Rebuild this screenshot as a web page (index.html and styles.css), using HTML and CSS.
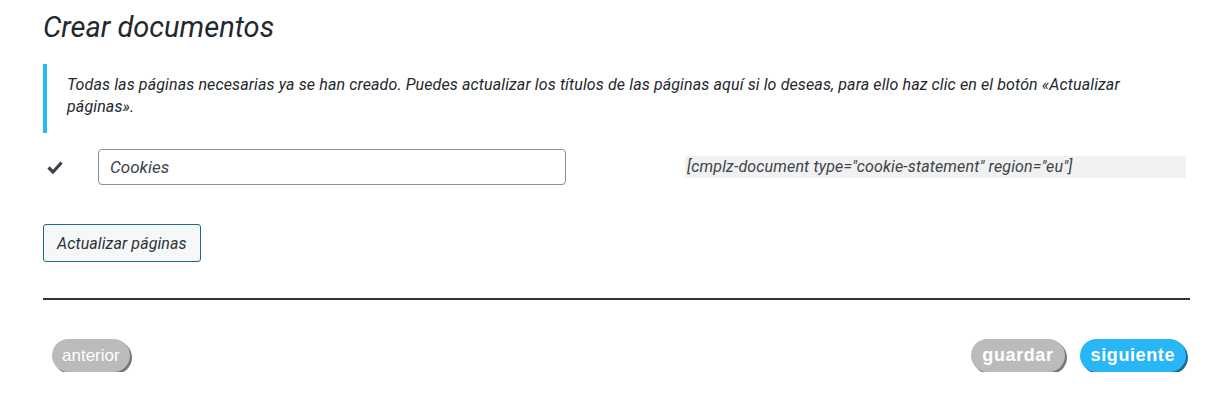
FILE: index.html
```html
<!DOCTYPE html>
<html lang="es">
<head>
<meta charset="utf-8">
<title>Crear documentos</title>
<link rel="stylesheet" href="styles.css">
</head>
<body>
<div class="wrap">
  <h1 class="title">Crear documentos</h1>
  <div class="notice">
    <p>Todas las páginas necesarias ya se han creado. Puedes actualizar los títulos de las páginas aquí si lo deseas, para ello haz clic en el botón «Actualizar páginas».</p>
  </div>
  <div class="doc-row">
    <span class="check">
      <svg width="16" height="14" viewBox="0 0 16 14"><path d="M1.5 7.5 L6 12 L14.5 2.5" fill="none" stroke="#3c434a" stroke-width="3.2" stroke-linecap="butt" stroke-linejoin="miter"/></svg>
    </span>
    <input class="page-input" type="text" value="Cookies">
    <div class="shortcode-cell"><span class="shortcode">[cmplz-document type="cookie-statement" region="eu"]</span></div>
  </div>
  <div class="actions">
    <button class="btn-update">Actualizar páginas</button>
  </div>
  <hr class="sep">
  <div class="nav">
    <button class="pill pill-grey">anterior</button>
    <div class="nav-right">
      <button class="pill pill-grey pill-bold">guardar</button>
      <button class="pill pill-blue pill-bold">siguiente</button>
    </div>
  </div>
</div>
</body>
</html>
```
FILE: styles.css
```css
* { box-sizing: border-box; }
html, body { margin: 0; padding: 0; background: #fff; }
body { font-family: Roboto, "Noto Sans", sans-serif; color: #3c434a; }
.wrap { padding: 0 23px 0 43px; }
.title {
  margin: 0;
  padding-top: 10px;
  font-size: 29px;
  line-height: 34px;
  font-weight: 400;
  font-style: italic;
  color: #23282d;
}
.notice {
  margin-top: 20px;
  border-left: 4px solid #29b6f6;
  padding: 10px 40px 10px 20px;
  height: 69px;
}
.notice p {
  margin: 0;
  font-size: 16px;
  line-height: 22px;
  font-style: italic;
  letter-spacing: 0.12px;
  color: #23282d;
}
.doc-row {
  display: flex;
  align-items: center;
  margin-top: 16px;
  height: 36px;
}
.check { width: 55px; padding-left: 4px; display: flex; align-items: center; }
.page-input {
  width: 468px;
  height: 36px;
  border: 1px solid #8c8f94;
  border-radius: 4px;
  padding: 0 11px;
  font-family: Roboto, sans-serif;
  font-size: 17px;
  font-style: italic;
  color: #3c434a;
  background: #fff;
}
.shortcode-cell { flex: 1; padding: 0 4px 0 119px; }
.shortcode {
  display: block;
  background: #f1f1f1;
  font-size: 16px;
  line-height: 22px;
  font-style: italic;
  letter-spacing: 0.15px;
  color: #3c434a;
  padding-left: 2px;
}
.actions { margin-top: 39px; }
.btn-update {
  height: 38px;
  padding: 0 13px;
  border: 1px solid #1d6a8c;
  border-radius: 3px;
  background: #f6f7f7;
  font-family: Roboto, sans-serif;
  font-size: 16px;
  font-style: italic;
  letter-spacing: 0.1px;
  color: #2c3338;
}
.sep {
  margin: 36px 0 0 0;
  border: 0;
  height: 2px;
  background: #333;
}
.nav {
  display: flex;
  justify-content: space-between;
  align-items: center;
  margin-top: 39px;
  padding: 0 4px 0 9px;
}
.nav-right { display: flex; gap: 15px; }
.pill {
  height: 33px;
  border: 0;
  border-radius: 17px;
  padding: 0 10px;
  font-family: "Liberation Sans", Arial, sans-serif;
  font-size: 17px;
  color: #fff;
  box-shadow: 2px 2px 0 #777;
}
.pill-grey { background: #bbbbbb; }
.pill-blue { background: #29b6f6; box-shadow: 2px 2px 0 #1a6f96; }
.pill-bold { font-weight: 700; font-size: 18px; letter-spacing: 0.6px; padding: 0 11px; }
```
